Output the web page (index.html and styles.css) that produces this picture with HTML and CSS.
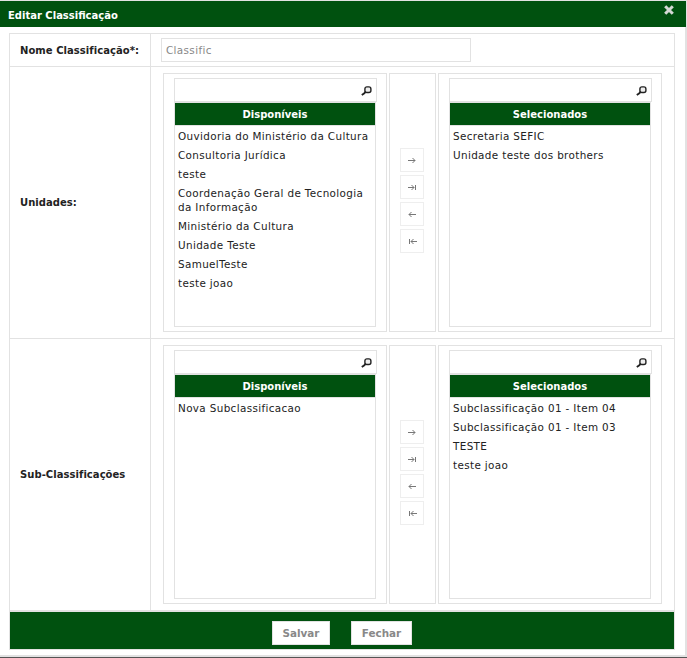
FILE: index.html
```
<!DOCTYPE html>
<html lang="pt-BR">
<head>
<meta charset="utf-8">
<title>Editar Classificação</title>
<link rel="stylesheet" href="styles.css">
</head>
<body>
<svg width="0" height="0" class="defs">
  <symbol id="lupa" viewBox="0 0 11 10"><rect x="3.9" y=".9" width="6" height="5.6" rx="2" fill="#eee" stroke="#222" stroke-width="1.4"/><path d="M4.8 5.8L3 7.5L.8 9" fill="none" stroke="#222" stroke-width="1.9"/></symbol>
  <symbol id="add" viewBox="0 0 9 7"><path d="M0 3.5H7M4.5 1L7 3.5L4.5 6"/></symbol>
  <symbol id="add-all" viewBox="0 0 9 7"><path d="M0 3.5H6M3.5 1L6 3.5L3.5 6M7.5 1V6"/></symbol>
  <symbol id="rem" viewBox="0 0 9 7"><path d="M8 3.5H1M3.5 1L1 3.5L3.5 6"/></symbol>
  <symbol id="rem-all" viewBox="0 0 9 7"><path d="M9 3.5H3M5.5 1L3 3.5L5.5 6M1.5 1V6"/></symbol>
</svg>
<div class="dialog">
  <header class="title"><span>Editar Classificação</span>
    <svg class="close" width="10" height="10" viewBox="0 0 10 10"><path d="M1.2 1.2L8.8 8.8M8.8 1.2L1.2 8.8" stroke="#d4d8d4" stroke-width="3"/></svg>
  </header>
  <main class="form">
    <div class="row name-row">
      <div class="label">Nome Classificação*:</div>
      <div class="field"><input class="name" value="Classific"></div>
    </div>
    <div class="row">
      <div class="label">Unidades:</div>
      <div class="field picker">
        <section class="box">
          <div class="search"><svg><use href="#lupa"/></svg></div>
          <div class="list"><h2>Disponíveis</h2>
            <ul><li>Ouvidoria do Ministério da Cultura</li><li>Consultoria Jurídica</li><li>teste</li><li>Coordenação Geral de Tecnologia<br>da Informação</li><li>Ministério da Cultura</li><li>Unidade Teste</li><li>SamuelTeste</li><li>teste joao</li></ul></div>
        </section>
        <div class="moves">
          <button><svg><use href="#add"/></svg></button><button><svg><use href="#add-all"/></svg></button><button><svg><use href="#rem"/></svg></button><button><svg><use href="#rem-all"/></svg></button>
        </div>
        <section class="box">
          <div class="search"><svg><use href="#lupa"/></svg></div>
          <div class="list"><h2>Selecionados</h2>
            <ul><li>Secretaria SEFIC</li><li>Unidade teste dos brothers</li></ul></div>
        </section>
      </div>
    </div>
    <div class="row">
      <div class="label">Sub-Classificações</div>
      <div class="field picker">
        <section class="box">
          <div class="search"><svg><use href="#lupa"/></svg></div>
          <div class="list"><h2>Disponíveis</h2>
            <ul><li>Nova Subclassificacao</li></ul></div>
        </section>
        <div class="moves">
          <button><svg><use href="#add"/></svg></button><button><svg><use href="#add-all"/></svg></button><button><svg><use href="#rem"/></svg></button><button><svg><use href="#rem-all"/></svg></button>
        </div>
        <section class="box">
          <div class="search"><svg><use href="#lupa"/></svg></div>
          <div class="list"><h2>Selecionados</h2>
            <ul><li>Subclassificação 01 - Item 04</li><li>Subclassificação 01 - Item 03</li><li>TESTE</li><li>teste joao</li></ul></div>
        </section>
      </div>
    </div>
    <footer class="actions"><button class="save">Salvar</button><button class="cancel">Fechar</button></footer>
  </main>
</div>
</body>
</html>
```
FILE: styles.css
```
* { box-sizing: border-box; margin: 0; padding: 0; }
body { width: 687px; height: 658px; overflow: hidden; background: #555; font: 10.4px/14px Verdana, "DejaVu Sans", sans-serif; letter-spacing: .36px; color: #222; }
.defs { display: block; }
.dialog { width: 687px; height: 657px; background: #fff; border: solid #e2e2e2; border-width: 1px 2px 2px 0; }
.title { display: flex; justify-content: space-between; width: 686px; height: 26px; padding: 8px 12px 0 8px; background: #00510f; color: #fff; font-size: 10px; font-weight: bold; letter-spacing: 0; }
.close { margin-top: -4px; }
.form { width: 666px; height: 617px; margin: 6px 0 0 9px; border: 1px solid #e2e2e2; }
.row { display: flex; height: 272px; border-bottom: 1px solid #e2e2e2; }
.name-row { height: 33px; }
.label { display: flex; align-items: center; width: 141px; padding: 1px 0 0 10px; border-right: 1px solid #e2e2e2; font-size: 10px; font-weight: bold; letter-spacing: .05px; white-space: nowrap; }
.field { flex: 1; padding: 4px 0 0 10px; }
.name { display: block; width: 310px; height: 24px; padding: 0 4px; border: 1px solid #e2e2e2; font: inherit; letter-spacing: inherit; color: #888; }
.picker { display: flex; gap: 2px; padding: 6px 0 0 12px; }
.box { width: 224px; height: 259px; padding: 4px 10px; border: 1px solid #e2e2e2; }
.search { display: flex; justify-content: flex-end; width: 203px; height: 24px; padding: 7px 4px 0 0; border: 1px solid #e2e2e2; }
.search svg { width: 11px; height: 10px; overflow: visible; }
.list { width: 202px; height: 225px; border: 1px solid #e2e2e2; }
.list h2 { height: 23px; border-bottom: 1px solid #e2e2e2; background: #00510f; background-clip: padding-box; color: #fff; font: bold 10px/23px Verdana, "DejaVu Sans", sans-serif; letter-spacing: 0; text-align: center; }
ul { padding: 3px; list-style: none; }
li { margin-bottom: 5px; white-space: nowrap; }
.moves { display: flex; flex-direction: column; align-items: flex-start; gap: 3px; width: 47px; height: 259px; padding: 74px 0 0 10px; border: 1px solid #e2e2e2; }
.moves button { display: flex; align-items: center; justify-content: center; width: 24px; height: 24px; padding-left: 1px; border: 1px solid #eee; background: #fff; }
.moves svg { width: 9px; height: 7px; fill: none; stroke: #777; }
.actions { display: flex; justify-content: center; gap: 21px; height: 38px; padding-top: 9px; border-top: 1px solid #e2e2e2; background: #00510f; }
.actions button { height: 24px; border: 1px solid #e2e2e2; background: #fff; color: #888; font: bold 10.4px/14px Verdana, "DejaVu Sans", sans-serif; }
.save { width: 58px; }
.cancel { width: 61px; }
```
